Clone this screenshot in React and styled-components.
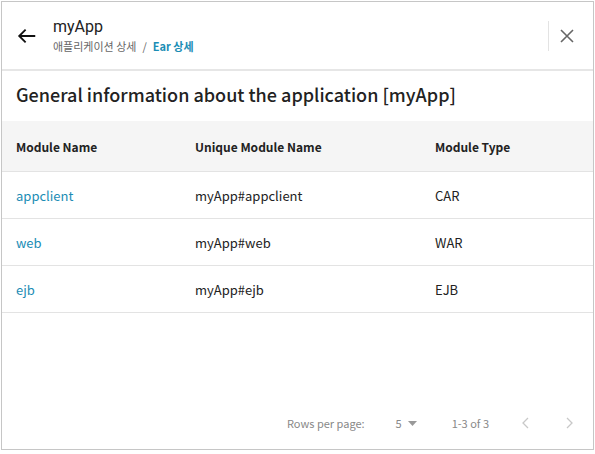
import React from "react";
import styled, { createGlobalStyle } from "styled-components";

const Global = createGlobalStyle`
  html, body { margin: 0; padding: 0; background: #fff; }
  body { font-family: "Noto Sans CJK KR", "Noto Sans", sans-serif; }
  * { box-sizing: border-box; }
`;

const Frame = styled.div`
  margin: 1px 0 0 1px;
  width: 593px;
  height: 449px;
  border: 1px solid #c6c6c6;
  display: flex;
  flex-direction: column;
  background: #fff;
`;

const Header = styled.header`
  height: 69px;
  flex: none;
  display: flex;
  align-items: center;
  padding: 0 0 0 13px;
  border-bottom: 2px solid #e6e6e6;
`;

const IconButton = styled.button`
  border: 0;
  background: none;
  padding: 0;
  width: ${(p) => p.$size || 24}px;
  height: ${(p) => p.$size || 24}px;
  display: flex;
  align-items: center;
  justify-content: center;
  color: ${(p) => p.$color || "#222"};
  cursor: pointer;
`;

const TitleBlock = styled.div`
  margin-left: 14px;
  display: flex;
  flex-direction: column;
  flex: 1;
`;

const AppName = styled.div`
  font-family: "Roboto", "Noto Sans", sans-serif;
  font-size: 16px;
  color: #222;
  line-height: 20px;
  margin-top: -1px;
`;

const Crumbs = styled.div`
  display: flex;
  align-items: center;
  gap: 6px;
  font-size: 11px;
  line-height: 16px;
  margin-top: 1px;
  color: #666;
`;

const Crumb = styled.span`
  color: ${(p) => (p.$active ? "#1b8db5" : "#666")};
  font-weight: ${(p) => (p.$active ? 700 : 400)};
`;

const CloseArea = styled.div`
  display: flex;
  align-items: center;
  height: 30px;
  border-left: 1px solid #e3e3e3;
  padding: 0 16px 0 8px;
`;

const Title = styled.h2`
  margin: 0;
  padding: 0 14px;
  height: 50px;
  display: flex;
  align-items: center;
  font-size: 18px;
  font-weight: 500;
  color: #222;
  margin-top: -2px;
  margin-bottom: 2px;
`;

const Table = styled.div`
  display: flex;
  flex-direction: column;
`;

const Row = styled.div`
  display: grid;
  grid-template-columns: 179px 240px 1fr;
  align-items: center;
  padding: 0 14px;
  height: ${(p) => (p.$head ? 51 : 47)}px;
  background: ${(p) => (p.$head ? "#f5f5f5" : "#fff")};
  border-bottom: 1px solid #e3e3e3;
  font-size: ${(p) => (p.$head ? 12 : 13)}px;
  font-weight: ${(p) => (p.$head ? 700 : 400)};
  color: #222;
`;

const Cell = styled.div`
  color: ${(p) => (p.$link ? "#1b8db5" : "#222")};
  white-space: nowrap;
`;

const Spacer = styled.div`
  flex: 1;
`;

const Footer = styled.div`
  height: 52px;
  display: flex;
  align-items: center;
  justify-content: flex-end;
  font-size: 11px;
  color: #888;
  padding-right: 12px;
`;

const Label = styled.span`
  margin-right: 31px;
`;

const Select = styled.span`
  display: flex;
  align-items: center;
  gap: 6px;
  margin-right: 35px;
`;

const Range = styled.span`
  margin-right: 25px;
`;

const Pager = styled.div`
  display: flex;
  gap: 19px;
`;

const Back = () => (
  <svg width="22" height="22" viewBox="0 0 24 24">
    <path d="M21 12H3.5M10.5 5l-7 7 7 7" fill="none" stroke="#111" strokeWidth="2" />
  </svg>
);

const Close = () => (
  <svg width="16" height="16" viewBox="0 0 16 16">
    <path d="M2 2l12 12M14 2L2 14" stroke="#666" strokeWidth="1.6" />
  </svg>
);

const Caret = () => (
  <svg width="9" height="5" viewBox="0 0 9 5">
    <path d="M0 0h9L4.5 5z" fill="#999" />
  </svg>
);

const Chevron = ({ dir }) => (
  <svg width="24" height="24" viewBox="0 0 24 24">
    <path
      d={dir === "left" ? "M14 7l-5 5 5 5" : "M10 7l5 5-5 5"}
      fill="none"
      stroke="#c8c8c8"
      strokeWidth="1.3"
    />
  </svg>
);

const rows = [
  ["appclient", "myApp#appclient", "CAR"],
  ["web", "myApp#web", "WAR"],
  ["ejb", "myApp#ejb", "EJB"],
];

export default function App() {
  return (
    <>
      <Global />
      <Frame>
        <Header>
          <IconButton $size={24}>
            <Back />
          </IconButton>
          <TitleBlock>
            <AppName>myApp</AppName>
            <Crumbs>
              <Crumb>애플리케이션 상세</Crumb>
              <span>/</span>
              <Crumb $active>Ear 상세</Crumb>
            </Crumbs>
          </TitleBlock>
          <CloseArea>
            <IconButton $size={20}>
              <Close />
            </IconButton>
          </CloseArea>
        </Header>
        <Title>General information about the application [myApp]</Title>
        <Table>
          <Row $head>
            <Cell>Module Name</Cell>
            <Cell>Unique Module Name</Cell>
            <Cell>Module Type</Cell>
          </Row>
          {rows.map((r) => (
            <Row key={r[0]}>
              <Cell $link>{r[0]}</Cell>
              <Cell>{r[1]}</Cell>
              <Cell>{r[2]}</Cell>
            </Row>
          ))}
        </Table>
        <Spacer />
        <Footer>
          <Label>Rows per page:</Label>
          <Select>
            5 <Caret />
          </Select>
          <Range>1-3 of 3</Range>
          <Pager>
            <Chevron dir="left" />
            <Chevron dir="right" />
          </Pager>
        </Footer>
      </Frame>
    </>
  );
}
